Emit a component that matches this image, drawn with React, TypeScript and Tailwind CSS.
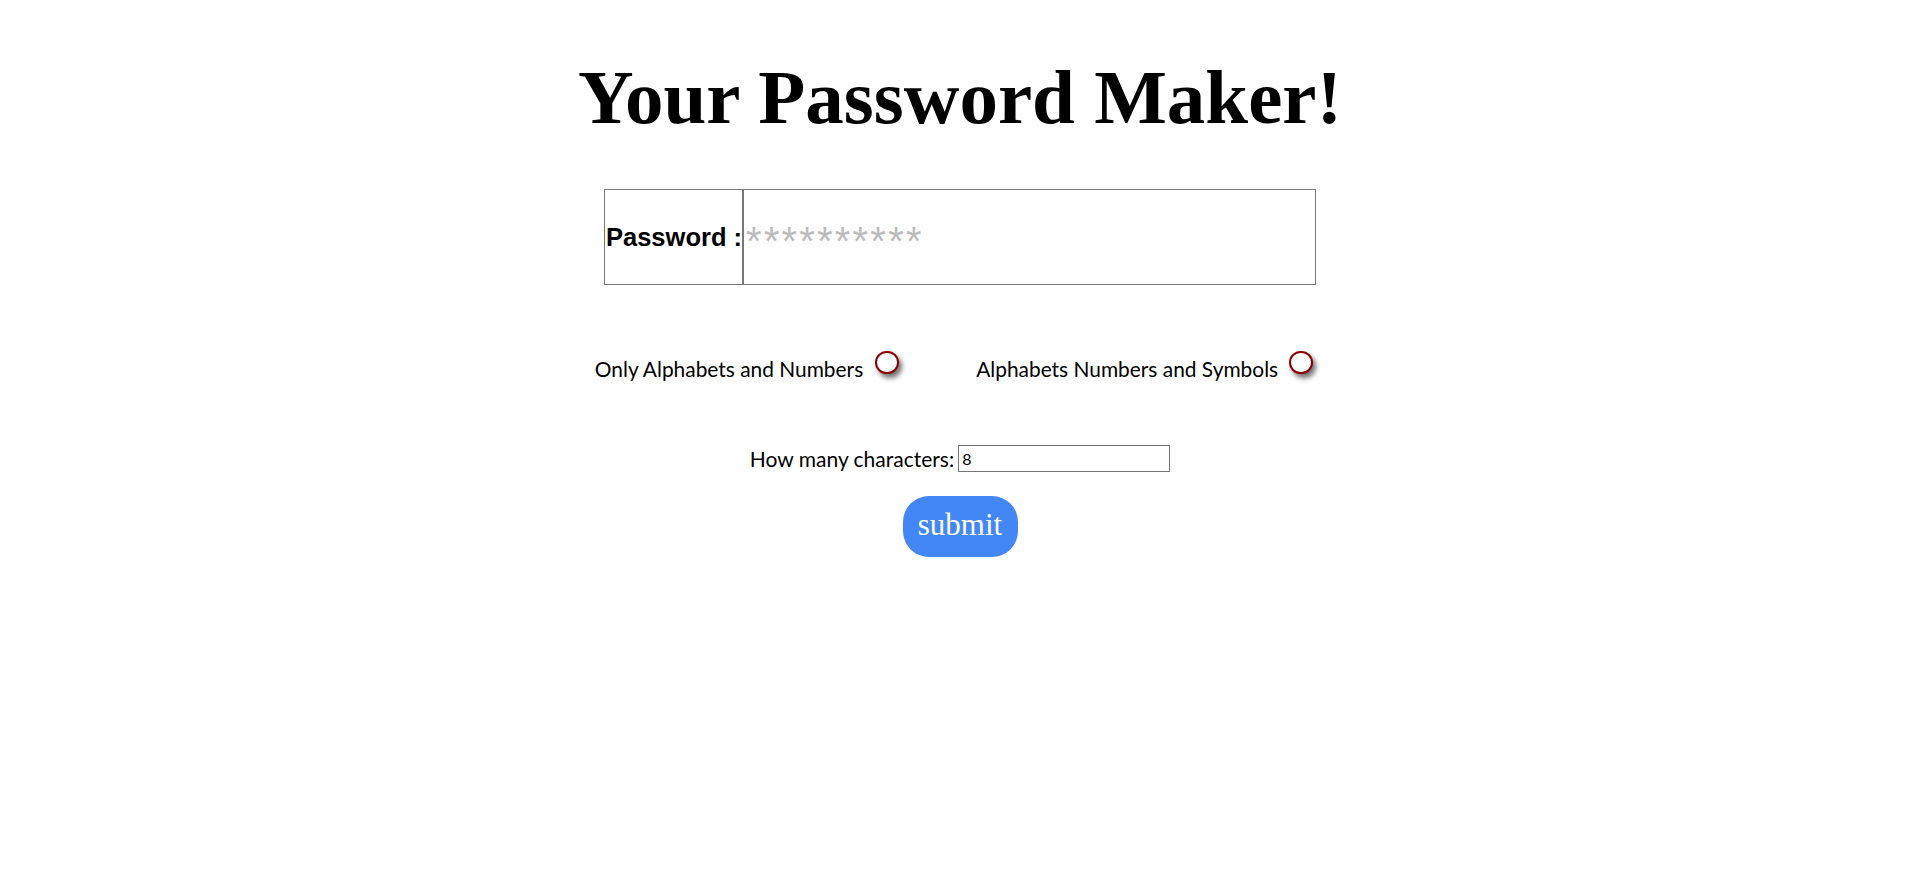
import { useState } from 'react';

// Small password generator page: title, output box, two radio options,
// a length field and a submit button.
function Radio({ checked, onClick }: { checked: boolean; onClick: () => void }) {
  return (
    <button
      type="button"
      onClick={onClick}
      className="w-[24px] h-[23px] rounded-full border-2 border-[#8b0000] bg-white shadow-[3px_4px_5px_rgba(0,0,0,0.55)] flex items-center justify-center mb-[13px]"
    >
      {checked && <span className="w-[10px] h-[10px] rounded-full bg-[#8b0000]" />}
    </button>
  );
}

export default function App() {
  const [mode, setMode] = useState<'alnum' | 'all' | null>(null);
  const [len, setLen] = useState('8');

  return (
    <div className="min-h-screen bg-white flex flex-col items-center text-black">
      <h1 className="mt-[59px] text-[77px] leading-none font-bold font-['Liberation_Serif',serif]">
        Your Password Maker!
      </h1>

      <div className="mt-[53px] flex w-[712px] h-[96px] border border-[#777777]">
        <div className="flex items-center pl-[1px] w-[139px] border-r-2 border-[#777777]">
          <span className="text-[25.5px] font-bold font-['Liberation_Sans',sans-serif] whitespace-nowrap">
            Password :
          </span>
        </div>
        <input
          readOnly
          placeholder="**********"
          className="flex-1 pl-[2px] pt-[8px] outline-none text-[40px] tracking-[2.2px] font-['Liberation_Sans',sans-serif] placeholder:text-[#bbbbbb]"
        />
      </div>

      <div className="mt-[67px] pr-[12px] flex items-center font-['Lato',sans-serif] text-[20.9px] h-[34px]">
        <span>Only Alphabets and Numbers</span>
        <span className="ml-[12px]">
          <Radio checked={mode === 'alnum'} onClick={() => setMode('alnum')} />
        </span>
        <span className="ml-[77px]">Alphabets Numbers and Symbols</span>
        <span className="ml-[11px]">
          <Radio checked={mode === 'all'} onClick={() => setMode('all')} />
        </span>
      </div>

      <div className="mt-[57px] flex items-center font-['Lato',sans-serif]">
        <span className="text-[21px]">How many characters:</span>
        <input
          value={len}
          onChange={(e) => setLen(e.target.value)}
          className="ml-[4px] w-[212px] h-[27px] border border-[#767676] px-[3px] text-[16px] outline-none"
        />
      </div>

      <button
        type="button"
        className="mt-[21px] w-[115px] h-[61px] rounded-[26px] bg-[#4287f5] text-white text-[31px] font-['Liberation_Serif',serif] pb-[1px]"
      >
        submit
      </button>
    </div>
  );
}
